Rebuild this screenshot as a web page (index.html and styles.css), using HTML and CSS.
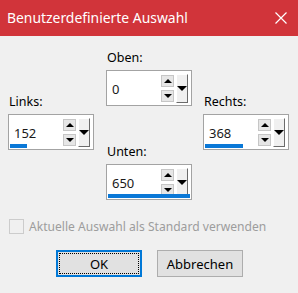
FILE: index.html
```html
<!DOCTYPE html>
<html lang="de">
<head>
<meta charset="utf-8">
<link rel="stylesheet" href="styles.css">
</head>
<body>
<div class="dialog">
  <div class="titlebar">
    <span class="title">Benutzerdefinierte Auswahl</span>
    <svg class="close" width="12" height="12" viewBox="0 0 12 12"><path d="M0.5 0.5 L11.5 11.5 M11.5 0.5 L0.5 11.5" stroke="#fff" stroke-width="1.2" fill="none"/></svg>
  </div>
  <div class="content">
    <div class="fields">
      <div class="col side">
        <div class="field">
          <label class="lbl">Links:</label>
          <div class="spin">
            <span class="val">152</span>
            <div class="arrows"><span class="abtn"><i class="tri up"></i></span><span class="abtn"><i class="tri down"></i></span></div>
            <div class="drop"><i class="tri dd"></i></div>
            <div class="bar" style="width:17px"></div>
          </div>
        </div>
      </div>
      <div class="col mid">
        <div class="field">
          <label class="lbl">Oben:</label>
          <div class="spin">
            <span class="val">0</span>
            <div class="arrows"><span class="abtn"><i class="tri up"></i></span><span class="abtn"><i class="tri down"></i></span></div>
            <div class="drop"><i class="tri dd"></i></div>
          </div>
        </div>
        <div class="field lower">
          <label class="lbl">Unten:</label>
          <div class="spin">
            <span class="val">650</span>
            <div class="arrows"><span class="abtn"><i class="tri up"></i></span><span class="abtn"><i class="tri down"></i></span></div>
            <div class="drop"><i class="tri dd"></i></div>
            <div class="bar" style="width:82px"></div>
          </div>
        </div>
      </div>
      <div class="col side">
        <div class="field">
          <label class="lbl">Rechts:</label>
          <div class="spin">
            <span class="val">368</span>
            <div class="arrows"><span class="abtn"><i class="tri up"></i></span><span class="abtn"><i class="tri down"></i></span></div>
            <div class="drop"><i class="tri dd"></i></div>
            <div class="bar" style="width:38px"></div>
          </div>
        </div>
      </div>
    </div>
    <div class="check">
      <span class="box"></span>
      <span class="ctext">Aktuelle Auswahl als Standard verwenden</span>
    </div>
    <div class="buttons">
      <div class="btn ok"><span class="focus">OK</span></div>
      <div class="btn">Abbrechen</div>
    </div>
  </div>
</div>
</body>
</html>
```

FILE: styles.css
```css
html, body {
  margin: 0;
  padding: 0;
  background: #f0f0f0;
}
.dialog {
  width: 298px;
  height: 293px;
  background: #f0f0f0;
  font-family: "Noto Sans", "Open Sans", sans-serif;
  font-size: 12px;
  color: #000;
  overflow: hidden;
}
.titlebar {
  height: 36px;
  background: #d1343a;
  display: flex;
  align-items: center;
  justify-content: space-between;
  padding: 0 11px 0 7px;
}
.title {
  color: #fff;
  font-size: 13.9px;
  position: relative;
  top: -1px;
}
.close {
  display: block;
}
.content {
  padding: 0 0 0 8px;
}
.fields {
  display: flex;
  column-gap: 12px;
}
.col {
  width: 86px;
  display: flex;
  flex-direction: column;
}
.col.side {
  padding-top: 58px;
}
.col.mid {
  padding-top: 14px;
}
.col.side:last-child {
  margin-left: -1px;
}
.field {
  display: flex;
  flex-direction: column;
}
.field.lower {
  margin-top: 38px;
}
.lbl {
  font-size: 12.5px;
  line-height: 16px;
  height: 16px;
  margin-bottom: 4px;
  padding-left: 1px;
}
.spin {
  position: relative;
  box-sizing: border-box;
  height: 36px;
  background: #fff;
  border: 1px solid #a3a3a3;
  display: flex;
  align-items: center;
  padding: 0 3px 0 5px;
}
.val {
  flex: 1;
  font-size: 13px;
  color: #1a1a1a;
  position: relative;
  top: 1px;
}
.arrows {
  display: flex;
  flex-direction: column;
  gap: 3px;
  margin-right: 2px;
}
.abtn {
  width: 11px;
  height: 10px;
  background: #e6e6e6;
  border: 1px solid #c6c6c6;
  display: flex;
  align-items: center;
  justify-content: center;
}
.drop {
  width: 12px;
  height: 29px;
  background: #f0f0f0;
  border-right: 1px solid #6b6b6b;
  border-bottom: 1px solid #6b6b6b;
  border-top: 1px solid #fff;
  border-left: 1px solid #fff;
  box-sizing: border-box;
  display: flex;
  align-items: center;
  justify-content: center;
}
.tri {
  display: block;
  width: 0;
  height: 0;
  border-left: 4px solid transparent;
  border-right: 4px solid transparent;
}
.tri.up {
  border-bottom: 4px solid #000;
}
.tri.down {
  border-top: 4px solid #000;
}
.tri.dd {
  border-left-width: 5px;
  border-right-width: 5px;
  border-top: 5px solid #000;
}
.bar {
  position: absolute;
  left: 1px;
  bottom: 1px;
  height: 4px;
  background: #0a78d7;
}
.check {
  display: flex;
  align-items: center;
  margin-top: 18px;
  padding-left: 1px;
}
.box {
  width: 13px;
  height: 13px;
  border: 1px solid #cccccc;
  background: #f0f0f0;
  margin-right: 5px;
}
.ctext {
  color: #9d9d9d;
  font-size: 12.1px;
}
.buttons {
  display: flex;
  gap: 15px;
  margin-top: 15px;
  padding-left: 48px;
}
.btn {
  width: 86px;
  height: 27px;
  box-sizing: border-box;
  background: #e1e1e1;
  border: 1px solid #adadad;
  display: flex;
  align-items: center;
  justify-content: center;
  font-size: 13px;
}
.btn.ok {
  border: 2px solid #0078d7;
  padding: 1px;
}
.focus {
  flex: 1;
  align-self: stretch;
  border: 1px dotted #000;
  display: flex;
  align-items: center;
  justify-content: center;
}
```
